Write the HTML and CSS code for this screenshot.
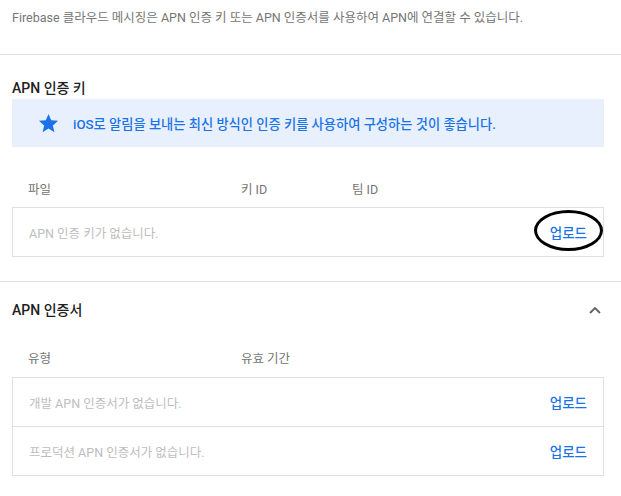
FILE: index.html
```html
<!DOCTYPE html>
<html lang="ko">
<head>
<meta charset="utf-8">
<link rel="stylesheet" href="styles.css">
</head>
<body>
<div class="intro">Firebase 클라우드 메시징은 APN 인증 키 또는 APN 인증서를 사용하여 APN에 연결할 수 있습니다.</div>
<hr class="divider">
<section class="section section-key">
  <h2 class="title">APN 인증 키</h2>
  <div class="info">
    <svg class="star" viewBox="0 0 24 24" width="23" height="23"><path fill="#1a73e8" d="M12 17.27L18.18 21l-1.64-7.03L22 9.24l-7.19-.61L12 2 9.19 8.63 2 9.24l5.46 4.73L5.82 21z"/></svg>
    <span>iOS로 알림을 보내는 최신 방식인 인증 키를 사용하여 구성하는 것이 좋습니다.</span>
  </div>
  <div class="cols cols-key">
    <span>파일</span><span>키 ID</span><span>팀 ID</span>
  </div>
  <div class="table">
    <div class="row">
      <span class="empty">APN 인증 키가 없습니다.</span>
      <span class="upload circled">업로드<span class="ring"></span></span>
    </div>
  </div>
</section>
<hr class="divider">
<section class="section section-cert">
  <div class="title-row">
    <h2 class="title">APN 인증서</h2>
    <svg class="chev" viewBox="0 0 12 8" width="12" height="8"><path d="M1 7 L6 2 L11 7" fill="none" stroke="#616161" stroke-width="1.8"/></svg>
  </div>
  <div class="cols cols-cert">
    <span>유형</span><span>유효 기간</span>
  </div>
  <div class="table">
    <div class="row">
      <span class="empty">개발 APN 인증서가 없습니다.</span>
      <span class="upload">업로드</span>
    </div>
    <div class="row">
      <span class="empty">프로덕션 APN 인증서가 없습니다.</span>
      <span class="upload">업로드</span>
    </div>
  </div>
</section>
</body>
</html>
```

FILE: styles.css
```css
* { box-sizing: border-box; }
body {
  margin: 0;
  background: #fff;
  font-family: Roboto, "Noto Sans CJK KR", sans-serif;
  color: #212121;
  width: 621px;
}
.intro {
  padding: 10px 12px 0 12px;
  height: 54px;
  font-size: 12.5px;
  line-height: 16px;
  color: #757575;
}
.divider {
  margin: 0;
  border: 0;
  border-top: 1px solid #e0e0e0;
}
.section {
  padding: 0 17px 0 12px;
}
.section-key { padding-bottom: 24px; }
.title {
  margin: 0;
  font-size: 14px;
  font-weight: 500;
  line-height: 18px;
  color: #212121;
}
.section > .title {
  padding-top: 24px;
  padding-bottom: 2px;
}
.info {
  display: flex;
  align-items: center;
  height: 48px;
  background: #e8f0fe;
  padding-left: 25px;
  gap: 13px;
  color: #1a73e8;
  font-size: 13.25px;
  font-weight: 500;
}
.star { flex: none; }
.cols {
  display: grid;
  align-items: center;
  padding: 0 16px;
  font-size: 12.5px;
  color: #757575;
}
.cols-key {
  grid-template-columns: 213px 111px 1fr;
  height: 60px;
  padding-top: 22px;
}
.cols-cert {
  grid-template-columns: 213px 1fr;
  height: 58px;
  padding-top: 18px;
}
.table {
  border: 1px solid #e0e0e0;
}
.row {
  display: flex;
  align-items: center;
  justify-content: space-between;
  height: 48px;
  padding: 0 16px;
  font-size: 12.5px;
}
.row + .row {
  border-top: 1px solid #e0e0e0;
  height: 49px;
}
.empty { color: #bdbdbd; }
.upload {
  color: #1a73e8;
  font-size: 13.5px;
  font-weight: 500;
}
.circled { position: relative; }
.ring {
  position: absolute;
  left: -16px;
  top: -12px;
  width: 69px;
  height: 41px;
  border: 3.5px solid #000;
  border-radius: 50%;
}
.title-row {
  display: flex;
  justify-content: space-between;
  align-items: center;
  padding-top: 19px;
}
.title-row .chev { margin-right: 3px; }
```
